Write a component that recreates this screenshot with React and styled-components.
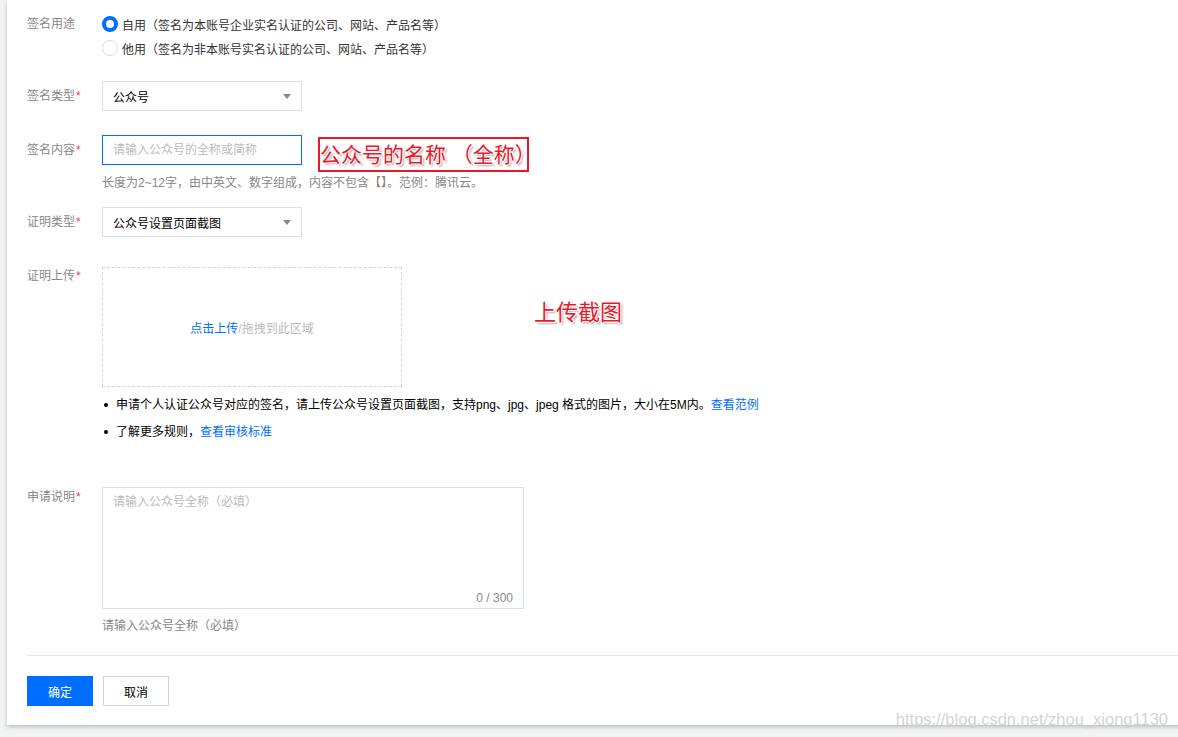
import React, { useState } from "react";
import styled, { createGlobalStyle } from "styled-components";

const GlobalStyle = createGlobalStyle`
  html, body {
    margin: 0;
    padding: 0;
    background: #f2f3f5;
    font-family: "Liberation Sans", "Noto Sans CJK SC", sans-serif;
    font-size: 12px;
    overflow: hidden;
  }
`;

const Page = styled.div`
  position: relative;
  width: 1178px;
  height: 737px;
  overflow: hidden;
`;

const Card = styled.div`
  margin-left: 7px;
  width: 1200px;
  height: 725px;
  background: #fff;
  box-shadow: 0 2px 4px rgba(0, 0, 0, 0.22);
  padding: 12px 0 0 20px;
  box-sizing: border-box;
`;

const Row = styled.div`
  display: flex;
  align-items: flex-start;
  margin-top: ${(p) => p.gap || 0}px;
`;

const Label = styled.div`
  width: 75px;
  flex: none;
  color: #888;
  line-height: ${(p) => p.lh || 18}px;
`;

const Star = styled.span`
  color: #e54545;
  margin-left: 1px;
`;

const Control = styled.div`
  display: flex;
  flex-direction: column;
`;

const Inline = styled.div`
  display: flex;
  align-items: flex-start;
`;

const RadioLine = styled.label`
  display: flex;
  align-items: center;
  height: 24px;
  color: #333;
  cursor: pointer;
`;

const RadioDot = styled.span`
  width: 16px;
  height: 16px;
  box-sizing: border-box;
  border-radius: 50%;
  margin-right: 4px;
  border: ${(p) => (p.checked ? "4px solid #006eff" : "1px solid #ddd")};
  background: #fff;
`;

const Select = styled.div`
  width: 200px;
  height: 30px;
  box-sizing: border-box;
  border: 1px solid #dcdfe6;
  display: flex;
  align-items: center;
  justify-content: space-between;
  padding: 0 10px;
  color: #000;
`;

const Caret = styled.span`
  width: 0;
  height: 0;
  border-left: 4px solid transparent;
  border-right: 4px solid transparent;
  border-top: 5px solid #888;
`;

const Input = styled.input`
  width: 200px;
  height: 30px;
  box-sizing: border-box;
  border: 1px solid #006eff;
  padding: 0 10px;
  font: inherit;
  outline: none;
  &::placeholder {
    color: #bbb;
  }
`;

const Hint = styled.div`
  color: #888;
  line-height: 18px;
  margin-top: ${(p) => p.mt || 0}px;
`;

const Annotation = styled.div`
  color: #e8192c;
  font-size: ${(p) => p.size}px;
  line-height: 1;
  white-space: nowrap;
  margin-left: ${(p) => p.ml || 0}px;
  margin-top: ${(p) => p.mt || 0}px;
  text-shadow: 1px 0 0 #fff, -1px 0 0 #fff, 0 1px 0 #fff, 0 -1px 0 #fff,
    2px 2px 2px rgba(0, 0, 0, 0.35);
`;

const RedBox = styled.div`
  margin-left: 16px;
  margin-top: 2px;
  width: 211px;
  height: 35px;
  box-sizing: border-box;
  border: 2px solid #e8192c;
  display: flex;
  align-items: center;
`;

const Dropzone = styled.div`
  width: 300px;
  height: 120px;
  box-sizing: border-box;
  border: 1px dashed #cfd5de;
  display: flex;
  align-items: center;
  justify-content: center;
  color: #bbb;
`;

const Link = styled.a`
  color: #006eff;
  text-decoration: none;
  cursor: pointer;
`;

const Bullets = styled.ul`
  margin: 8px 0 0;
  padding: 0;
  list-style: none;
`;

const Bullet = styled.li`
  display: flex;
  align-items: center;
  line-height: 20px;
  margin-bottom: 7px;
  color: #000;
  &::before {
    content: "";
    width: 4px;
    height: 4px;
    border-radius: 50%;
    background: #000;
    margin: 0 8px 0 2px;
  }
`;

const AreaWrap = styled.div`
  position: relative;
  width: 422px;
  height: 122px;
  box-sizing: border-box;
  border: 1px solid #dcdfe6;
`;

const Area = styled.textarea`
  width: 100%;
  height: 100%;
  box-sizing: border-box;
  border: none;
  resize: none;
  outline: none;
  padding: 5px 10px;
  font: inherit;
  line-height: 18px;
  &::placeholder {
    color: #bbb;
  }
`;

const Counter = styled.span`
  position: absolute;
  right: 10px;
  bottom: 3px;
  color: #888;
`;

const Divider = styled.div`
  margin-top: 20px;
  border-top: 1px solid #e5e5e5;
`;

const Actions = styled.div`
  display: flex;
  gap: 10px;
  margin-top: 20px;
`;

const Button = styled.button`
  width: 66px;
  height: 30px;
  box-sizing: border-box;
  font: inherit;
  cursor: pointer;
  border: 1px solid ${(p) => (p.primary ? "#006eff" : "#cfd5de")};
  background: ${(p) => (p.primary ? "#006eff" : "#fff")};
  color: ${(p) => (p.primary ? "#fff" : "#000")};
`;

const Watermark = styled.div`
  position: absolute;
  right: 10px;
  bottom: 8px;
  font-size: 16.5px;
  color: #d4d4d4;
  font-family: "Liberation Sans", sans-serif;
`;

const App = () => {
  const [usage, setUsage] = useState("self");
  const [desc, setDesc] = useState("");

  return (
    <Page>
      <GlobalStyle />
      <Card>
        <Row>
          <Label lh={24}>签名用途</Label>
          <Control>
            <RadioLine onClick={() => setUsage("self")}>
              <RadioDot checked={usage === "self"} />
              自用（签名为本账号企业实名认证的公司、网站、产品名等）
            </RadioLine>
            <RadioLine onClick={() => setUsage("other")}>
              <RadioDot checked={usage === "other"} />
              他用（签名为非本账号实名认证的公司、网站、产品名等）
            </RadioLine>
          </Control>
        </Row>

        <Row gap={21}>
          <Label lh={30}>
            签名类型<Star>*</Star>
          </Label>
          <Select>
            公众号
            <Caret />
          </Select>
        </Row>

        <Row gap={24}>
          <Label lh={30}>
            签名内容<Star>*</Star>
          </Label>
          <Control>
            <Inline>
              <Input placeholder="请输入公众号的全称或简称" />
              <RedBox>
                <Annotation size={21}>公众号的名称 （全称）</Annotation>
              </RedBox>
            </Inline>
            <Hint mt={2}>长度为2~12字，由中英文、数字组成，内容不包含【】。范例：腾讯云。</Hint>
          </Control>
        </Row>

        <Row gap={15}>
          <Label lh={30}>
            证明类型<Star>*</Star>
          </Label>
          <Select>
            公众号设置页面截图
            <Caret />
          </Select>
        </Row>

        <Row gap={30}>
          <Label>
            证明上传<Star>*</Star>
          </Label>
          <Control>
            <Inline>
              <Dropzone>
                <Link>点击上传</Link>/拖拽到此区域
              </Dropzone>
              <Annotation size={22} ml={132} mt={35}>
                上传截图
              </Annotation>
            </Inline>
            <Bullets>
              <Bullet>
                申请个人认证公众号对应的签名，请上传公众号设置页面截图，支持png、jpg、jpeg 格式的图片，大小在5M内。
                <Link>查看范例</Link>
              </Bullet>
              <Bullet>
                了解更多规则，<Link>查看审核标准</Link>
              </Bullet>
            </Bullets>
          </Control>
        </Row>

        <Row gap={38}>
          <Label lh={20}>
            申请说明<Star>*</Star>
          </Label>
          <Control>
            <AreaWrap>
              <Area
                value={desc}
                maxLength={300}
                onChange={(e) => setDesc(e.target.value)}
                placeholder="请输入公众号全称（必填）"
              />
              <Counter>{desc.length} / 300</Counter>
            </AreaWrap>
            <Hint mt={8}>请输入公众号全称（必填）</Hint>
          </Control>
        </Row>

        <Divider />
        <Actions>
          <Button primary>确定</Button>
          <Button>取消</Button>
        </Actions>
      </Card>
      <Watermark>https://blog.csdn.net/zhou_xiong1130</Watermark>
    </Page>
  );
};

export default App;
